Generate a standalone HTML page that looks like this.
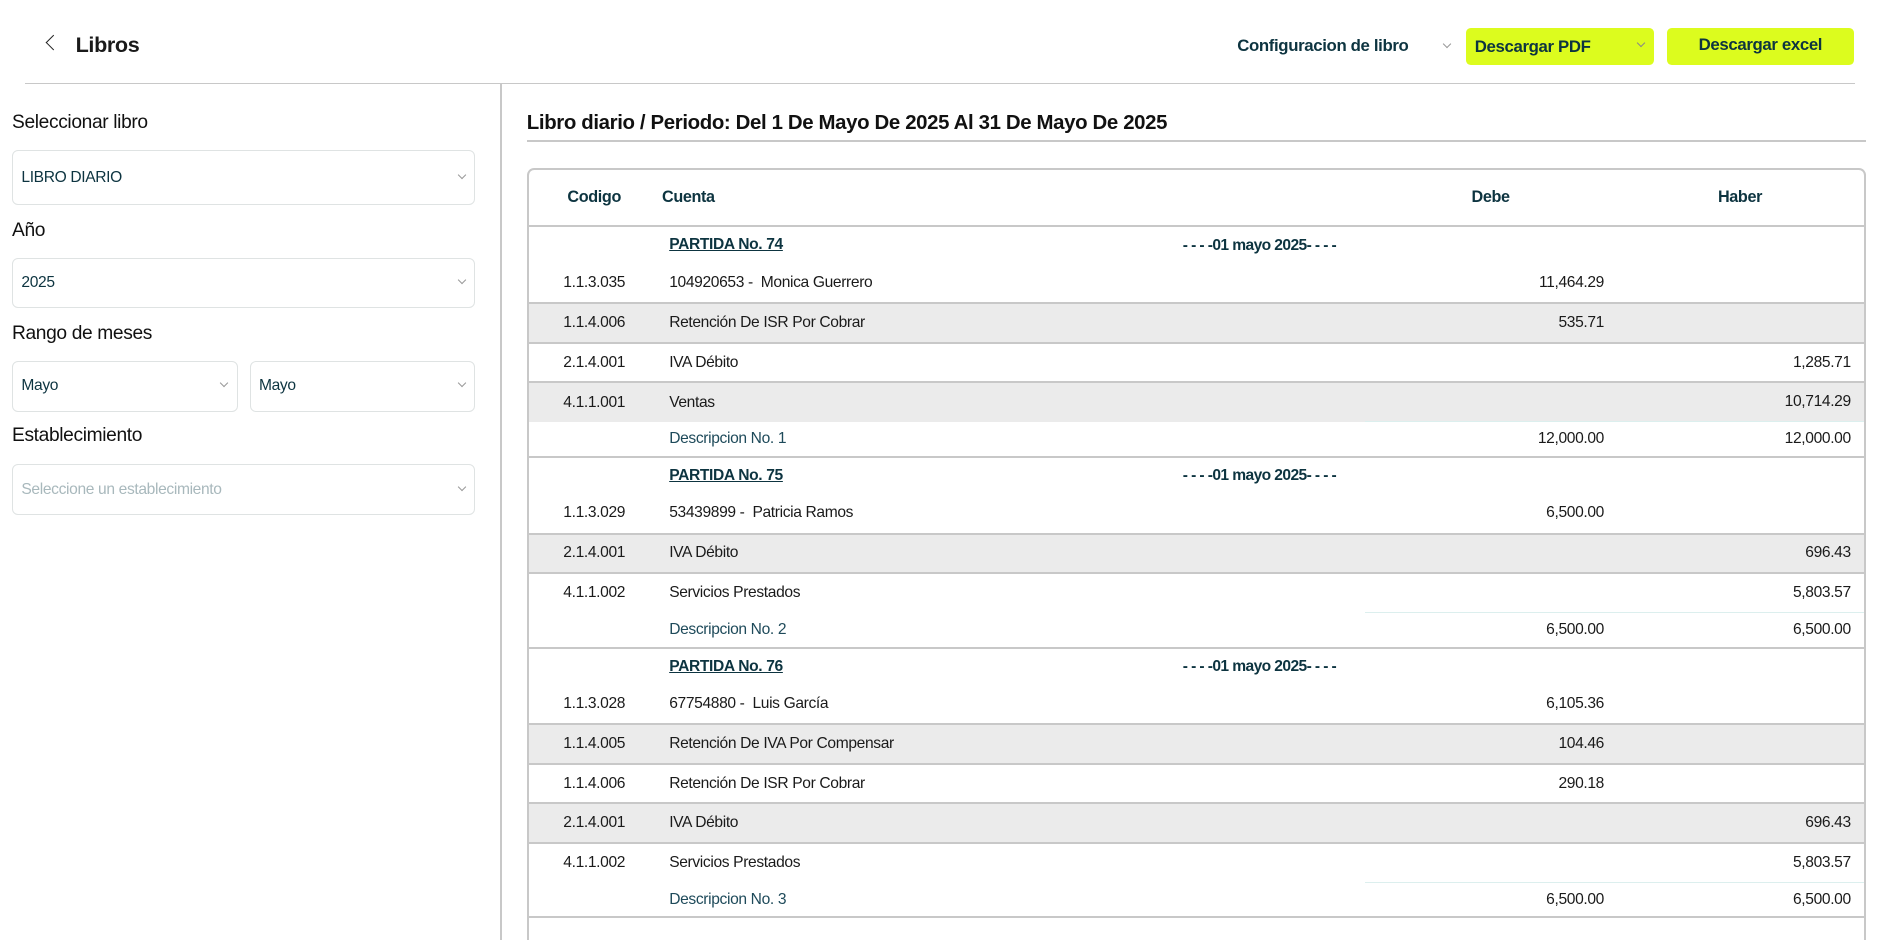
<!DOCTYPE html>
<html><head><meta charset="utf-8"><style>
*{box-sizing:border-box;margin:0;padding:0}
html,body{width:1883px;height:940px;overflow:hidden;background:#fff}
body{font-family:"Liberation Sans",sans-serif;color:#1a1a1a;letter-spacing:-0.3px}
#w{zoom:1.2;width:1570px;height:784px;position:relative}
.abs{position:absolute}
.hdr-line{left:21px;top:69px;width:1525px;height:1px;background:#c8c8c8}
.vline{left:417px;top:69px;width:1px;height:720px;background:#c8c8c8}
.back{left:40px;top:31px;width:9px;height:9px;border-left:1.6px solid #222;border-bottom:1.6px solid #222;transform:rotate(45deg)}
.ttl{left:63px;top:27px;font-size:18px;font-weight:bold}
.cfg{left:1031px;top:30px;font-size:14px;color:#0d3440;font-weight:bold}
.chev{display:inline-block;width:6px;height:6px;border-right:1.2px solid #999;border-bottom:1.2px solid #999;transform:rotate(45deg)}
.btn{top:23px;height:31px;background:#dcfc1e;border-radius:4px;font-size:14px;color:#0d3440;font-weight:bold}
label.l{position:absolute;left:10px;font-size:16px;color:#111}
.sel{position:absolute;border:1px solid #dfe3e3;border-radius:5px;font-size:13px;color:#0d3440;padding-left:7px;display:flex;align-items:center}
.sel .chev{position:absolute;right:8px;top:50%;margin-top:-5px;width:5px;height:5px}
.rt{left:439px;top:93px;font-size:17px;font-weight:bold;color:#111}
.rtl{left:439px;top:117px;width:1116px;height:1px;background:#c8c8c8}
.tbl{left:439px;top:140px;width:1116px;height:660px;border:2px solid #c8c8c8;border-bottom:none;border-radius:6px 6px 0 0;overflow:hidden}
table{border-collapse:collapse;width:100%;font-size:13px}
th{height:47px;border-bottom:2px solid #c8c8c8;font-weight:bold;color:#0d3440;font-size:13.5px}
td{height:33px;padding:0}
td.c{text-align:center;width:109px}
td.a{width:588px;padding-left:8px}
td.d{width:209px;text-align:right;padding-right:10px}
td.h{text-align:right;padding-right:11px}
tr.g td{background:#ebebeb}
tr.b td{border-bottom:2px solid #c8c8c8}
tr.p td{height:31px}
tr.p td.a{position:relative;font-weight:bold;color:#0d3440}
tr.p u{text-decoration:underline}
tr.p .dt{position:absolute;left:436px;top:8px;letter-spacing:-0.5px}
tr.ds td{color:#1e4a5a;height:29px}
tr.ds td.d,tr.ds td.h{border-top:1px solid #dcefee;color:#1a1a1a}
</style></head><body><div id="w">
<div class="abs back"></div>
<div class="abs ttl">Libros</div>
<div class="abs cfg">Configuracion de libro <span class="chev" style="margin-left:26px;width:5px;height:5px;position:relative;top:-3px"></span></div>
<div class="abs btn" style="left:1222px;width:156px;padding:8px 0 0 7px">Descargar PDF<span class="chev" style="position:absolute;right:8px;top:10px;width:5px;height:5px;border-color:#888"></span></div>
<div class="abs btn" style="left:1389px;width:156px;text-align:center;padding-top:6px">Descargar excel</div>
<div class="abs hdr-line"></div>
<div class="abs vline"></div>

<label class="l" style="top:93px">Seleccionar libro</label>
<div class="sel" style="left:10px;top:125px;width:386px;height:46px">LIBRO DIARIO<span class="chev"></span></div>
<label class="l" style="top:183px">Año</label>
<div class="sel" style="left:10px;top:215px;width:386px;height:42px">2025<span class="chev"></span></div>
<label class="l" style="top:269px">Rango de meses</label>
<div class="sel" style="left:10px;top:301px;width:188px;height:42px">Mayo<span class="chev"></span></div>
<div class="sel" style="left:208px;top:301px;width:188px;height:42px">Mayo<span class="chev"></span></div>
<label class="l" style="top:354px">Establecimiento</label>
<div class="sel" style="left:10px;top:387px;width:386px;height:42px;color:#a8b8bc">Seleccione un establecimiento<span class="chev"></span></div>

<div class="abs rt">Libro diario / Periodo: Del 1 De Mayo De 2025 Al 31 De Mayo De 2025</div>
<div class="abs rtl"></div>
<div class="abs tbl"><table>
<tr><th style="width:109px">Codigo</th><th style="text-align:left;padding-left:2px;width:588px">Cuenta</th><th style="width:209px">Debe</th><th>Haber</th></tr>
<tr class="p"><td class="c"></td><td class="a"><u>PARTIDA No. 74</u><span class="dt">- - - -01 mayo 2025- - - -</span></td><td class="d"></td><td class="h"></td></tr>
<tr class="b"><td class="c">1.1.3.035</td><td class="a">104920653 -&nbsp; Monica Guerrero</td><td class="d">11,464.29</td><td class="h"></td></tr>
<tr class="g b"><td class="c">1.1.4.006</td><td class="a">Retención De ISR Por Cobrar</td><td class="d">535.71</td><td class="h"></td></tr>
<tr class="b"><td class="c">2.1.4.001</td><td class="a">IVA Débito</td><td class="d"></td><td class="h">1,285.71</td></tr>
<tr class="g"><td class="c">4.1.1.001</td><td class="a">Ventas</td><td class="d"></td><td class="h">10,714.29</td></tr>
<tr class="ds b"><td class="c"></td><td class="a">Descripcion No. 1</td><td class="d">12,000.00</td><td class="h">12,000.00</td></tr>
<tr class="p"><td class="c"></td><td class="a"><u>PARTIDA No. 75</u><span class="dt">- - - -01 mayo 2025- - - -</span></td><td class="d"></td><td class="h"></td></tr>
<tr class="b"><td class="c">1.1.3.029</td><td class="a">53439899 -&nbsp; Patricia Ramos</td><td class="d">6,500.00</td><td class="h"></td></tr>
<tr class="g b"><td class="c">2.1.4.001</td><td class="a">IVA Débito</td><td class="d"></td><td class="h">696.43</td></tr>
<tr><td class="c">4.1.1.002</td><td class="a">Servicios Prestados</td><td class="d"></td><td class="h">5,803.57</td></tr>
<tr class="ds b"><td class="c"></td><td class="a">Descripcion No. 2</td><td class="d">6,500.00</td><td class="h">6,500.00</td></tr>
<tr class="p"><td class="c"></td><td class="a"><u>PARTIDA No. 76</u><span class="dt">- - - -01 mayo 2025- - - -</span></td><td class="d"></td><td class="h"></td></tr>
<tr class="b"><td class="c">1.1.3.028</td><td class="a">67754880 -&nbsp; Luis García</td><td class="d">6,105.36</td><td class="h"></td></tr>
<tr class="g b"><td class="c">1.1.4.005</td><td class="a">Retención De IVA Por Compensar</td><td class="d">104.46</td><td class="h"></td></tr>
<tr class="b"><td class="c">1.1.4.006</td><td class="a">Retención De ISR Por Cobrar</td><td class="d">290.18</td><td class="h"></td></tr>
<tr class="g b"><td class="c">2.1.4.001</td><td class="a">IVA Débito</td><td class="d"></td><td class="h">696.43</td></tr>
<tr><td class="c">4.1.1.002</td><td class="a">Servicios Prestados</td><td class="d"></td><td class="h">5,803.57</td></tr>
<tr class="ds b"><td class="c"></td><td class="a">Descripcion No. 3</td><td class="d">6,500.00</td><td class="h">6,500.00</td></tr>
</table></div>
</div></body></html>
